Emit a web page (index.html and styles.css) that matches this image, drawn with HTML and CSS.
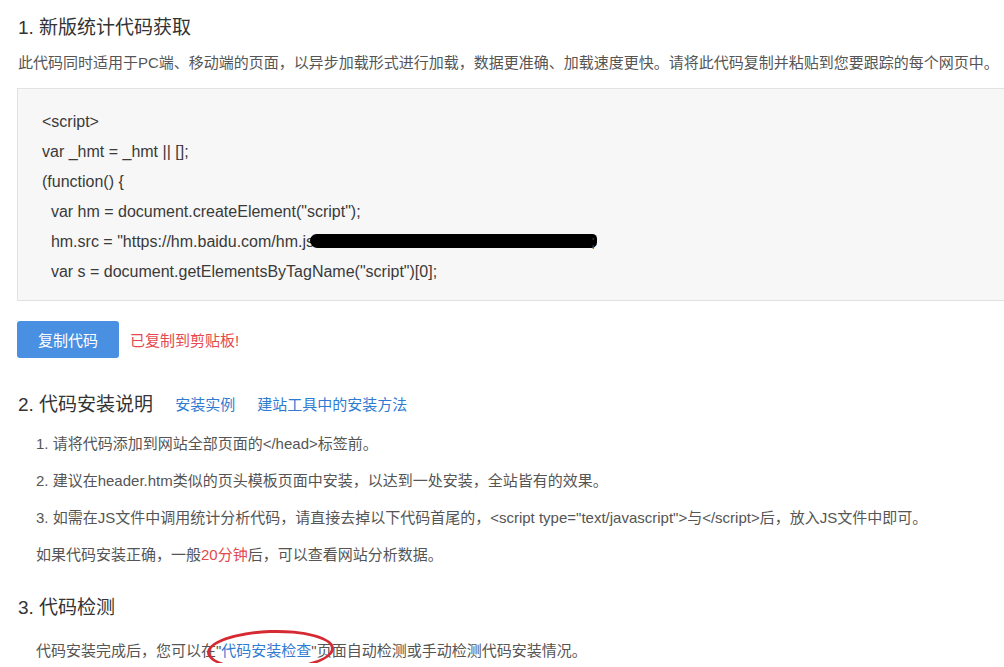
FILE: index.html
```html
<!DOCTYPE html>
<html lang="zh-CN">
<head>
<meta charset="utf-8">
<title>统计代码获取</title>
<link rel="stylesheet" href="styles.css">
</head>
<body>
<div class="page">
  <h3 class="sec-title first">1. 新版统计代码获取</h3>
  <p class="desc">此代码同时适用于PC端、移动端的页面，以异步加载形式进行加载，数据更准确、加载速度更快。请将此代码复制并粘贴到您要跟踪的每个网页中。</p>
  <div class="code-box"><div class="code-line">&lt;script&gt;</div><div class="code-line">var _hmt = _hmt || [];</div><div class="code-line">(function() {</div><div class="code-line">  var hm = document.createElement("script");</div><div class="code-line">  hm.src = "https://hm.baidu.com/hm.js<span class="redact"></span>;</div><div class="code-line">  var s = document.getElementsByTagName("script")[0];</div></div>
  <div class="actions">
    <button class="btn-copy" type="button">复制代码</button>
    <span class="copied">已复制到剪贴板!</span>
  </div>

  <h3 class="sec-title second">2. 代码安装说明<a class="title-link" href="#">安装实例</a><a class="title-link" href="#">建站工具中的安装方法</a></h3>
  <ul class="steps">
    <li>1. 请将代码添加到网站全部页面的&lt;/head&gt;标签前。</li>
    <li>2. 建议在header.htm类似的页头模板页面中安装，以达到一处安装，全站皆有的效果。</li>
    <li>3. 如需在JS文件中调用统计分析代码，请直接去掉以下代码首尾的，&lt;script type="text/javascript"&gt;与&lt;/script&gt;后，放入JS文件中即可。</li>
    <li>如果代码安装正确，一般<span class="hl">20分钟</span>后，可以查看网站分析数据。</li>
  </ul>

  <h3 class="sec-title third">3. 代码检测</h3>
  <p class="check">代码安装完成后，您可以在<span class="circled">"<a class="inline-link" href="#">代码安装检查</a>"<span class="ellipse"></span></span>页面自动检测或手动检测代码安装情况。</p>
</div>
</body>
</html>
```

FILE: styles.css
```css
html, body {
  margin: 0;
  padding: 0;
  background: #ffffff;
  overflow: hidden;
}

body {
  font-family: "Liberation Sans", "Noto Sans CJK SC", sans-serif;
  color: #555555;
  font-size: 15px;
}

.page {
  padding: 0 0 0 17px;
}

.sec-title {
  margin: 0;
  font-size: 19px;
  font-weight: normal;
  line-height: 28px;
  color: #333333;
  padding-left: 1px;
  display: flex;
  align-items: center;
}

.sec-title.first { padding-top: 14px; }
.sec-title.second { margin-top: 33px; }
.sec-title.third { margin-top: 27px; }

.title-link {
  font-size: 15px;
  color: #2f7bd3;
  text-decoration: none;
  margin-left: 22px;
}

.desc {
  margin: 9px 0 0 0;
  line-height: 24px;
  color: #555555;
  padding-left: 1px;
  white-space: nowrap;
}

.code-box {
  margin-top: 13px;
  background: #f7f7f7;
  border: 1px solid #e2e2e2;
  border-right: none;
  padding: 18px 0 13px 24px;
  color: #3a3a3a;
}

.code-line {
  white-space: pre;
  line-height: 30px;
  font-size: 16px;
}

.redact {
  display: inline-block;
  width: 287px;
  height: 14px;
  background: #000000;
  border-radius: 7px 5px 6px 8px;
  vertical-align: -1px;
  margin-left: -4px;
  margin-right: -6px;
}

.actions {
  margin-top: 20px;
  display: flex;
  align-items: center;
  gap: 11px;
}

.btn-copy {
  width: 102px;
  height: 37px;
  border: none;
  border-radius: 3px;
  background: #4a90e2;
  color: #ffffff;
  font-family: "Liberation Sans", "Noto Sans CJK SC", sans-serif;
  font-size: 15px;
  padding: 0;
  cursor: pointer;
}

.copied {
  color: #e5484d;
  font-size: 15px;
}

.steps {
  list-style: none;
  margin: 13px 0 0 0;
  padding: 0 0 0 19px;
  display: flex;
  flex-direction: column;
  gap: 13px;
}

.steps li {
  line-height: 24px;
  white-space: nowrap;
}

.hl {
  color: #e5484d;
}

.check {
  margin: 17px 0 0 0;
  padding-left: 19px;
  line-height: 24px;
  white-space: nowrap;
}

.circled {
  position: relative;
}

.inline-link {
  color: #2f7bd3;
  text-decoration: none;
}

.ellipse {
  position: absolute;
  left: -9px;
  top: -12px;
  width: 121px;
  height: 35px;
  border: 3px solid #d62a33;
  border-radius: 50%;
  transform: rotate(-2deg);
  pointer-events: none;
}
```
